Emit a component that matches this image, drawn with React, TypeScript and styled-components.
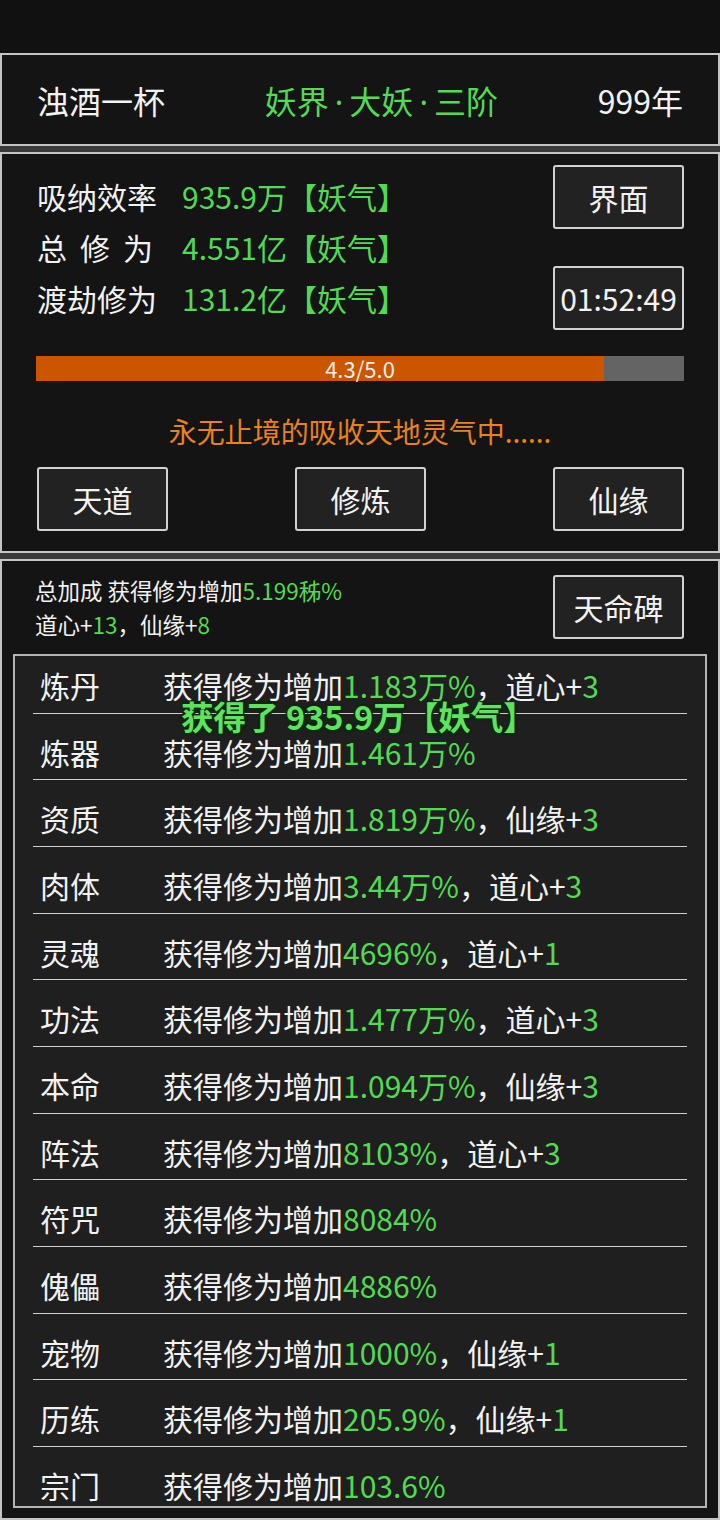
import styled, { createGlobalStyle } from "styled-components";

const GREEN = "#52da52";
const WHITE = "#f2f2f2";

const GlobalStyle = createGlobalStyle`
  html, body {
    margin: 0;
    padding: 0;
    background: #111111;
  }
  body {
    font-family: "Noto Sans CJK SC", "Noto Sans", sans-serif;
    color: ${WHITE};
  }
`;

const STATS = [
  { id: 1, label: "吸纳效率", value: "935.9万【妖气】", spread: false },
  { id: 2, label: "总修为", value: "4.551亿【妖气】", spread: true },
  { id: 3, label: "渡劫修为", value: "131.2亿【妖气】", spread: false },
];

const BONUS = [
  { id: 1, name: "炼丹", value: "1.183万%", extra: "道心", num: "3" },
  { id: 2, name: "炼器", value: "1.461万%" },
  { id: 3, name: "资质", value: "1.819万%", extra: "仙缘", num: "3" },
  { id: 4, name: "肉体", value: "3.44万%", extra: "道心", num: "3" },
  { id: 5, name: "灵魂", value: "4696%", extra: "道心", num: "1" },
  { id: 6, name: "功法", value: "1.477万%", extra: "道心", num: "3" },
  { id: 7, name: "本命", value: "1.094万%", extra: "仙缘", num: "3" },
  { id: 8, name: "阵法", value: "8103%", extra: "道心", num: "3" },
  { id: 9, name: "符咒", value: "8084%" },
  { id: 10, name: "傀儡", value: "4886%" },
  { id: 11, name: "宠物", value: "1000%", extra: "仙缘", num: "1" },
  { id: 12, name: "历练", value: "205.9%", extra: "仙缘", num: "1" },
  { id: 13, name: "宗门", value: "103.6%" },
];

const REALM = ["妖界", "大妖", "三阶"];

const progress = { current: 4.3, max: 5.0, fill: 0.877 };

export default function App() {
  return (
    <>
      <GlobalStyle />
      <Page>
        <StatusBar />
        <Panels>
          <HeaderPanel>
            <Name>浊酒一杯</Name>
            <Realm>
              {REALM.map((part, i) => (
                <span key={part}>
                  {i > 0 && <Dot>·</Dot>}
                  {part}
                </span>
              ))}
            </Realm>
            <Age>999年</Age>
          </HeaderPanel>

          <MainPanel>
            <TopSection>
              <StatList>
                {STATS.map((s) => (
                  <StatRow key={s.id}>
                    <StatLabel spread={s.spread}>{s.label}</StatLabel>
                    <Green>{s.value}</Green>
                  </StatRow>
                ))}
              </StatList>
              <SideButtons>
                <Button>界面</Button>
                <Button>01:52:49</Button>
              </SideButtons>
            </TopSection>
            <Bar>
              <BarFill style={{ width: `${progress.fill * 100}%` }} />
              <BarText>
                {progress.current.toFixed(1)}/{progress.max.toFixed(1)}
              </BarText>
            </Bar>
            <Message>永无止境的吸收天地灵气中......</Message>
            <ButtonRow>
              <Button>天道</Button>
              <Button>修炼</Button>
              <Button>仙缘</Button>
            </ButtonRow>
          </MainPanel>

          <BonusPanel>
            <BonusHeader>
              <Summary>
                <div>
                  总加成 获得修为增加<Green>5.199秭%</Green>
                </div>
                <div>
                  道心+<Green>13</Green>，仙缘+<Green>8</Green>
                </div>
              </Summary>
              <Button>天命碑</Button>
            </BonusHeader>
            <ListBox>
              <ListInner>
                {BONUS.map((b) => (
                  <BonusRow key={b.id}>
                    <RowName>{b.name}</RowName>
                    <span>
                      获得修为增加<Green>{b.value}</Green>
                      {b.extra && (
                        <>
                          ，{b.extra}+<Green>{b.num}</Green>
                        </>
                      )}
                    </span>
                  </BonusRow>
                ))}
              </ListInner>
              <Toast>获得了 935.9万【妖气】</Toast>
            </ListBox>
          </BonusPanel>
        </Panels>
      </Page>
    </>
  );
}

const Page = styled.div`
  width: 720px;
  height: 1520px;
  display: flex;
  flex-direction: column;
  overflow: hidden;
`;

const StatusBar = styled.div`
  flex-shrink: 0;
  height: 53px;
  background: #111111;
`;

const Panels = styled.div`
  flex: 1;
  min-height: 0;
  display: flex;
  flex-direction: column;
  gap: 6px;
  background: #3a3a3a;
`;

const Panel = styled.div`
  box-sizing: border-box;
  flex-shrink: 0;
  border: 2px solid #c4c4c4;
  background: #141414;
`;

const HeaderPanel = styled(Panel)`
  height: 93px;
  display: flex;
  align-items: center;
  justify-content: space-between;
  padding: 0 35px 0 35px;
  font-size: 32px;
`;

const Name = styled.span`
  color: ${WHITE};
`;

const Realm = styled.span`
  color: ${GREEN};
`;

const Dot = styled.span`
  font-family: "Noto Sans", sans-serif;
  padding: 0 6px;
`;

const Age = styled.span`
  color: ${WHITE};
`;

const MainPanel = styled(Panel)`
  height: 401px;
  padding: 11px 34px 20px 34px;
  display: flex;
  flex-direction: column;
`;

const TopSection = styled.div`
  display: flex;
  justify-content: space-between;
  height: 166px;
`;

const StatList = styled.div`
  display: flex;
  flex-direction: column;
  justify-content: center;
  padding-left: 1px;
`;

const StatRow = styled.div`
  display: flex;
  font-size: 30px;
  line-height: 51px;
  white-space: nowrap;
`;

const StatLabel = styled.span<{ spread?: boolean }>`
  width: 145px;
  flex-shrink: 0;
  letter-spacing: ${(props) => (props.spread ? "13px" : "0")};
`;

const SideButtons = styled.div`
  display: flex;
  flex-direction: column;
  justify-content: space-between;
`;

const Button = styled.div`
  box-sizing: border-box;
  width: 131px;
  height: 64px;
  display: flex;
  align-items: center;
  justify-content: center;
  border: 2px solid #d2d2d2;
  border-radius: 3px;
  background: #222222;
  color: ${WHITE};
  font-size: 30px;
`;

const Bar = styled.div`
  position: relative;
  margin-top: 26px;
  height: 25px;
  background: #646464;
  display: flex;
`;

const BarFill = styled.div`
  height: 100%;
  background: #cc5500;
`;

const BarText = styled.span`
  position: absolute;
  inset: 0;
  display: flex;
  align-items: center;
  justify-content: center;
  font-size: 22px;
  line-height: 25px;
  color: #f0f0f0;
`;

const Message = styled.div`
  margin-top: 30px;
  height: 40px;
  line-height: 40px;
  text-align: center;
  font-size: 28px;
  color: #e8821c;
`;

const ButtonRow = styled.div`
  margin-top: 16px;
  display: flex;
  justify-content: space-between;
  padding-left: 1px;
`;

const BonusPanel = styled(Panel)`
  flex: 1;
  min-height: 0;
  padding: 12px 11px 10px 11px;
  display: flex;
  flex-direction: column;
`;

const BonusHeader = styled.div`
  display: flex;
  justify-content: space-between;
  align-items: center;
  padding: 0 23px 0 22px;
`;

const Summary = styled.div`
  font-size: 22.5px;
  line-height: 34px;
`;

const ListBox = styled.div`
  position: relative;
  margin-top: 13px;
  flex: 1;
  min-height: 0;
  box-sizing: border-box;
  border: 2px solid #b4b4b4;
  background: #1f1f1f;
  overflow: hidden;
`;

const ListInner = styled.div`
  margin-top: -9px;
  padding: 0 18px;
`;

const BonusRow = styled.div`
  box-sizing: border-box;
  height: 66.67px;
  padding: 18px 0 0 7px;
  display: flex;
  font-size: 30px;
  line-height: 40px;
  border-bottom: 1px solid #d0d0d0;
  white-space: nowrap;
`;

const RowName = styled.span`
  width: 123px;
  flex-shrink: 0;
`;

const Green = styled.span`
  color: ${GREEN};
`;

const Toast = styled.div`
  position: absolute;
  left: 166px;
  top: 41px;
  font-size: 32.5px;
  line-height: 38px;
  font-weight: 700;
  color: #5ee35e;
  white-space: nowrap;
  text-shadow:
    -1.5px -1.5px 0 #0d2a0d,
    1.5px -1.5px 0 #0d2a0d,
    -1.5px 1.5px 0 #0d2a0d,
    1.5px 1.5px 0 #0d2a0d,
    0 0 3px #000;
`;
